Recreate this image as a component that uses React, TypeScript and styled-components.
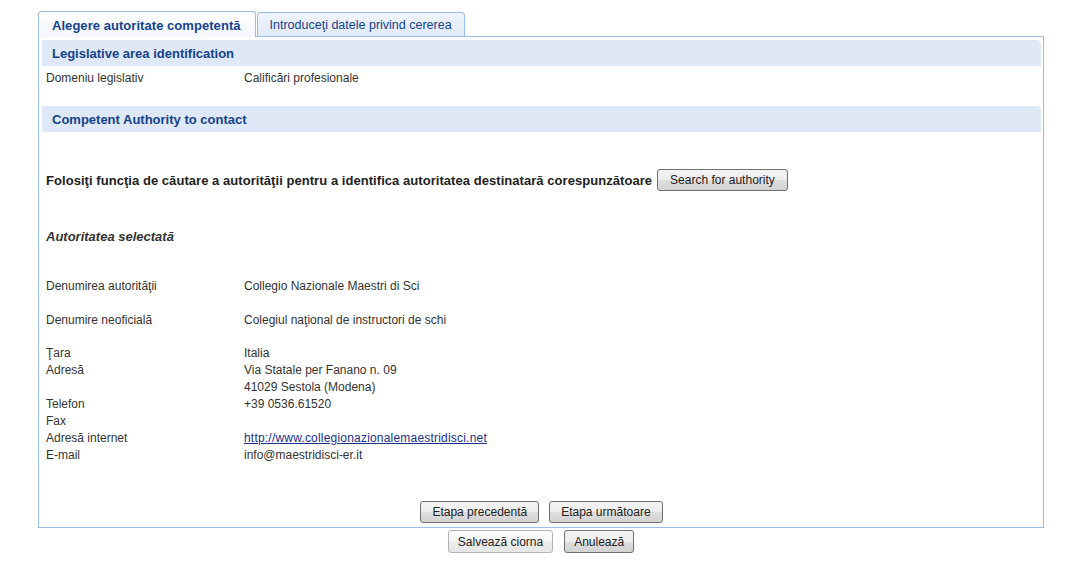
import { FC } from 'react';
import styled, { createGlobalStyle } from 'styled-components';

const GlobalStyle = createGlobalStyle`
  html, body {
    margin: 0;
    padding: 0;
    background: #fff;
  }
  body {
    font-family: "Liberation Sans", Arial, sans-serif;
    font-size: 12px;
    color: #333;
  }
`

const COLORS = {
  BORDER: '#99bbe8',
  TITLE: '#15428b',
  HEADER_BG: '#dfe8f6',
  TEXT: '#333333',
  LINK: '#1a2f8c',
};

const Page = styled.div`
  width: 1006px;
  padding: 11px 0 0 38px;
`
const TabStrip = styled.div`
  display: flex;
  align-items: flex-end;
  gap: 1px;
  height: 25px;
`
const Tab = styled.div<{ $active?: boolean }>`
  position: relative;
  z-index: 1;
  display: flex;
  align-items: center;
  box-sizing: border-box;
  height: ${({ $active }) => ($active ? '26px' : '24px')};
  margin-bottom: ${({ $active }) => ($active ? '-1px' : '0')};
  padding: ${({ $active }) => ($active ? '2px 14px 0 13px' : '1px 12px 0')};
  border: 1px solid ${COLORS.BORDER};
  border-bottom: none;
  border-radius: 4px 4px 0 0;
  background: ${({ $active }) =>
    $active ? 'linear-gradient(#ffffff, #f3f7fd)' : 'linear-gradient(#eff4fc, #e1eaf8)'};
  color: ${COLORS.TITLE};
  font-weight: ${({ $active }) => ($active ? 700 : 400)};
  font-size: ${({ $active }) => ($active ? '13px' : '12.5px')};
  letter-spacing: ${({ $active }) => ($active ? '0.05px' : '0')};
  white-space: nowrap;
`
const Panel = styled.div`
  border: 1px solid ${COLORS.BORDER};
  padding: 3px 2px 4px 3px;
`
const SectionHeader = styled.div`
  display: flex;
  align-items: center;
  height: 26px;
  padding-left: 10px;
  background: ${COLORS.HEADER_BG};
  border-radius: 0 5px 0 0;
  color: ${COLORS.TITLE};
  font-weight: 700;
  font-size: 13px;
`
const FieldGrid = styled.div<{ $top?: number; $bottom?: number }>`
  display: grid;
  grid-template-columns: 198px 1fr;
  line-height: 17px;
  margin: ${({ $top = 0, $bottom = 0 }) => `${$top}px 0 ${$bottom}px 4px`};
`
const Gap = styled.div<{ $h: number }>`
  grid-column: 1 / -1;
  height: ${({ $h }) => $h}px;
`
const Label = styled.div`
  color: ${COLORS.TEXT};
`
const Value = styled.div`
  color: ${COLORS.TEXT};
`
const Link = styled.a`
  color: ${COLORS.LINK};
  text-decoration: underline;
  letter-spacing: 0.2px;
`
const SearchRow = styled.div`
  display: flex;
  align-items: center;
  gap: 5px;
  margin: 37px 0 0 4px;
`
const Prompt = styled.span`
  font-weight: 700;
  font-size: 13px;
  letter-spacing: 0.05px;
  color: #222;
`
const Subtitle = styled.div`
  margin: 37px 0 0 4px;
  line-height: 17px;
  font-weight: 700;
  font-style: italic;
  font-size: 13px;
  color: ${COLORS.TEXT};
`
const ButtonRow = styled.div<{ $gap: number }>`
  display: flex;
  justify-content: center;
  gap: ${({ $gap }) => $gap}px;
`
const Button = styled.button<{ $light?: boolean; $h?: number; $pad?: number }>`
  box-sizing: border-box;
  height: ${({ $h = 22 }) => $h}px;
  padding: 0 ${({ $pad = 10 }) => $pad}px;
  border: 1px solid ${({ $light }) => ($light ? '#b4b4b4' : '#707070')};
  border-radius: 3px;
  background: ${({ $light }) =>
    $light
      ? 'linear-gradient(#fdfdfd, #f4f4f4 50%, #ececec 51%, #e6e6e6)'
      : 'linear-gradient(#f4f4f4, #ececec 50%, #dedede 51%, #d2d2d2)'};
  font-family: "Liberation Sans", Arial, sans-serif;
  font-size: 12px;
  color: #222;
  cursor: pointer;
`
const NavRow = styled(ButtonRow)`
  margin-top: 37px;
`
const FooterRow = styled(ButtonRow)`
  margin-top: 2px;
`

const App: FC = () => {
  return (
    <>
      <GlobalStyle />
      <Page>
        <TabStrip>
          <Tab $active>Alegere autoritate competentă</Tab>
          <Tab>Introduceţi datele privind cererea</Tab>
        </TabStrip>
        <Panel>
          <SectionHeader>Legislative area identification</SectionHeader>
          <FieldGrid $top={4} $bottom={19}>
            <Label>Domeniu legislativ</Label>
            <Value>Calificări profesionale</Value>
          </FieldGrid>

          <SectionHeader>Competent Authority to contact</SectionHeader>
          <SearchRow>
            <Prompt>Folosiţi funcţia de căutare a autorităţii pentru a identifica autoritatea destinatară corespunzătoare</Prompt>
            <Button $pad={12}>Search for authority</Button>
          </SearchRow>
          <Subtitle>Autoritatea selectată</Subtitle>

          <FieldGrid $top={33}>
            <Label>Denumirea autorităţii</Label>
            <Value>Collegio Nazionale Maestri di Sci</Value>
            <Gap $h={17} />
            <Label>Denumire neoficială</Label>
            <Value>Colegiul naţional de instructori de schi</Value>
            <Gap $h={16} />
            <Label>Ţara</Label>
            <Value>Italia</Value>
            <Label>Adresă</Label>
            <Value>Via Statale per Fanano n. 09<br />41029 Sestola (Modena)</Value>
            <Label>Telefon</Label>
            <Value>+39 0536.61520</Value>
            <Label>Fax</Label>
            <Value />
            <Label>Adresă internet</Label>
            <Value><Link href="#">http://www.collegionazionalemaestridisci.net</Link></Value>
            <Label>E-mail</Label>
            <Value>info@maestridisci-er.it</Value>
          </FieldGrid>

          <NavRow $gap={10}>
            <Button $pad={11}>Etapa precedentă</Button>
            <Button $pad={11}>Etapa următoare</Button>
          </NavRow>
        </Panel>
        <FooterRow $gap={11}>
          <Button $light $h={23} $pad={9}>Salvează ciorna</Button>
          <Button $h={23} $pad={9}>Anulează</Button>
        </FooterRow>
      </Page>
    </>
  );
};

export default App;
